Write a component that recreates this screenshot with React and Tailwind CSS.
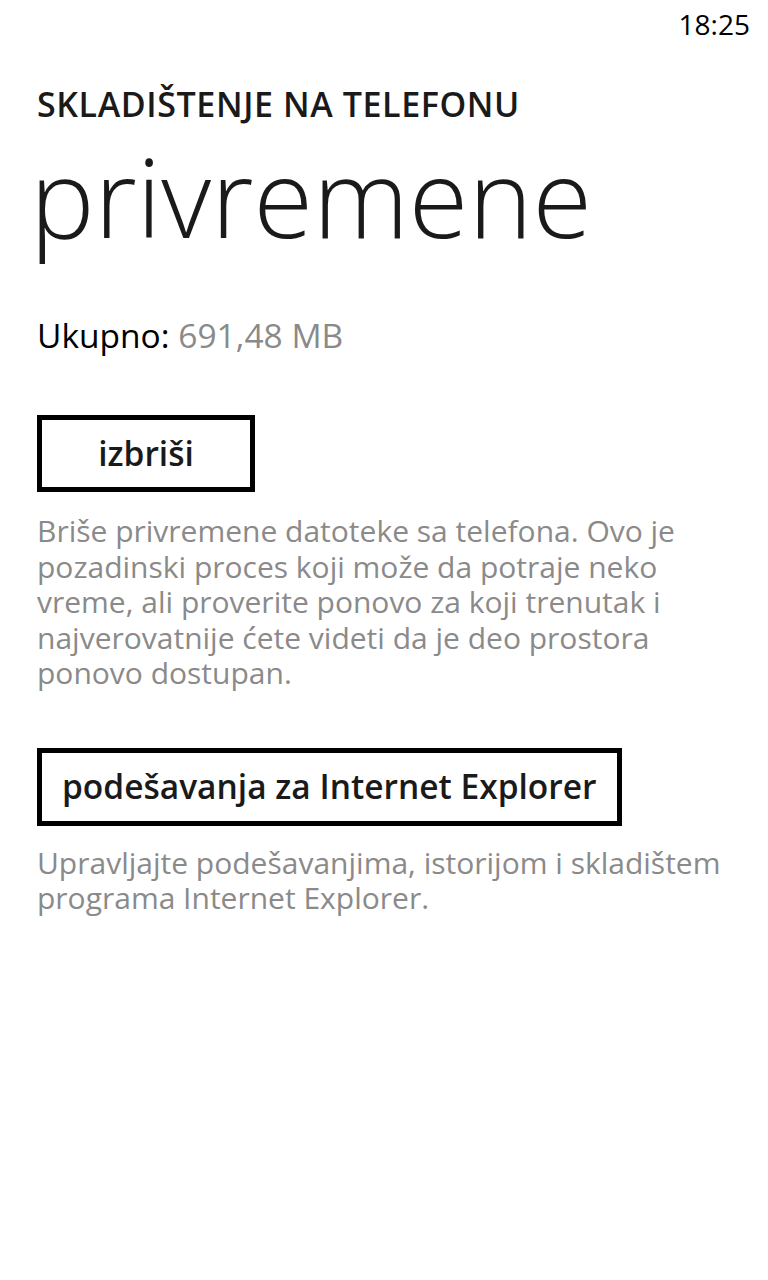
export default function App() {
  return (
    <div className="w-[768px] h-[1280px] bg-white font-['Open_Sans',sans-serif] text-[#1a1a1a] overflow-hidden">
      <div className="h-[48px] flex justify-end pr-[18px] text-[28px] leading-[48px] text-black">
        18:25
      </div>
      <div className="px-[37px]">
        <div className="mt-[39px] text-[34px] leading-[34px] tracking-[0.6px] font-semibold">
          SKLADIŠTENJE NA TELEFONU
        </div>
        <div className="mt-[2px] ml-[-7px] text-[108.5px] leading-[146px] font-light">
          privremene
        </div>
        <div className="mt-[50px] text-[33.5px] leading-[32px] text-black">
          Ukupno: <span className="text-[#8a8a8a]">691,48 MB</span>
        </div>
        <button className="mt-[64px] w-[218px] h-[77px] border-[5px] border-black flex items-center justify-center text-[33.5px] font-semibold text-[#1a1a1a]">
          izbriši
        </button>
        <p className="mt-[21px] text-[30px] leading-[35.5px] text-[#8a8a8a]">
          Briše privremene datoteke sa telefona. Ovo je pozadinski proces koji može da potraje neko vreme, ali proverite ponovo za koji trenutak i najverovatnije ćete videti da je deo prostora ponovo dostupan.
        </p>
        <button className="mt-[57px] h-[78px] px-[20px] border-[5px] border-black flex items-center justify-center text-[33.5px] font-semibold text-[#1a1a1a]">
          podešavanja za Internet Explorer
        </button>
        <p className="mt-[19px] text-[30px] leading-[35.5px] text-[#8a8a8a]">
          Upravljajte podešavanjima, istorijom i skladištem programa Internet Explorer.
        </p>
      </div>
    </div>
  );
}
